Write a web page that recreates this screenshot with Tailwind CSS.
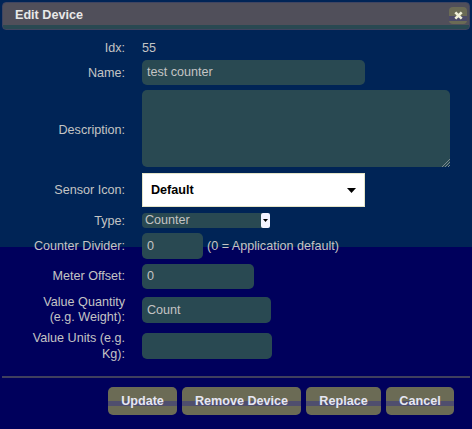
<!DOCTYPE html>
<html>
<head>
<meta charset="utf-8">
<script src="https://cdn.jsdelivr.net/npm/@tailwindcss/browser@4"></script>
</head>
<body class="m-0 w-[472px] h-[429px] overflow-hidden font-['Liberation_Sans',Arial,sans-serif] text-[12.6px] leading-[15px] text-[#c4c4c4] bg-[linear-gradient(#002456_0,#002456_247px,#00005c_247px)]">
<div class="pt-[2px] px-[2px]">
  <div class="h-[28px] rounded-[4px] border border-[#3f4460] bg-[linear-gradient(#504f5a_0,#504f5a_22px,#294952_22px)] flex items-center justify-between pl-[12px] pr-[2px]">
    <span class="font-bold text-[#e8e8e8] leading-none mb-[1px]">Edit Device</span>
    <span class="w-[18px] h-[17px] rounded-[4px] mb-[1px] bg-[linear-gradient(#6b6b55_0,#6b6b55_9px,#4b4a68_9px,#4b4a68_14px,#6b6b55_14px)] flex items-center justify-center">
      <svg width="9" height="9" viewBox="0 0 9 9"><path d="M1.3 1.3 L7.7 7.7 M7.7 1.3 L1.3 7.7" stroke="#f0f0d8" stroke-width="2.6"/></svg>
    </span>
  </div>
</div>
<div class="flex flex-col mt-[8px]">
  <div class="flex items-center h-[20px]">
    <div class="w-[125px] text-right">Idx:</div>
    <div class="ml-[17px]">55</div>
  </div>
  <div class="flex items-center mt-[2px]">
    <div class="w-[125px] text-right pt-[2px]">Name:</div>
    <div class="ml-[17px] w-[223px] h-[25px] rounded-[5px] bg-[#294952] flex items-center px-[5px]">test counter</div>
  </div>
  <div class="flex items-center mt-[5px]">
    <div class="w-[125px] text-right pt-[4px]">Description:</div>
    <div class="relative ml-[17px] w-[308px] h-[77px] rounded-[5px] bg-[#294952]">
      <svg class="absolute right-0 bottom-0" width="9" height="9" viewBox="0 0 9 9"><path d="M1 9 L9 1 M4 9 L9 4 M7 9 L9 7" stroke="#7a8a90" stroke-width="1"/></svg>
    </div>
  </div>
  <div class="flex items-center mt-[6px]">
    <div class="w-[125px] text-right">Sensor Icon:</div>
    <div class="ml-[17px] w-[223px] h-[34px] bg-white border border-[#e4e4c8] flex items-center justify-between pl-[8px] pr-[8px] text-black font-bold">
      <span>Default</span>
      <svg width="9" height="5" viewBox="0 0 9 5"><path d="M0 0 H9 L4.5 5 Z" fill="#000"/></svg>
    </div>
  </div>
  <div class="flex items-center mt-[6px]">
    <div class="w-[125px] text-right mt-[1px] -mb-[1px]">Type:</div>
    <div class="ml-[17px] w-[128px] h-[15px] rounded-[4px] bg-[#294952] flex items-center justify-between pl-[3px]">
      <span>Counter</span>
      <span class="w-[9px] h-[15px] rounded-[2px] bg-[#f4f4ff] flex items-center justify-center">
        <svg width="5" height="3" viewBox="0 0 5 3"><path d="M0 0 H5 L2.5 3 Z" fill="#000"/></svg>
      </span>
    </div>
  </div>
  <div class="flex items-center mt-[5px]">
    <div class="w-[125px] text-right">Counter Divider:</div>
    <div class="ml-[17px] w-[61px] h-[26px] rounded-[5px] bg-[#294952] flex items-center px-[5px]">0</div>
    <div class="ml-[4px]">(0 = Application default)</div>
  </div>
  <div class="flex items-center mt-[5px]">
    <div class="w-[125px] text-right">Meter Offset:</div>
    <div class="ml-[17px] w-[112px] h-[25px] rounded-[5px] bg-[#294952] flex items-center px-[5px]">0</div>
  </div>
  <div class="flex items-center mt-[6px]">
    <div class="w-[125px] text-right">Value Quantity<br>(e.g. Weight):</div>
    <div class="ml-[17px] w-[129px] h-[26px] rounded-[5px] bg-[#294952] flex items-center px-[5px]">Count</div>
  </div>
  <div class="flex items-center mt-[5px]">
    <div class="w-[125px] text-right leading-[16px]">Value Units (e.g.<br>Kg):</div>
    <div class="ml-[17px] w-[130px] h-[26px] rounded-[5px] bg-[#294952]"></div>
  </div>
</div>
<div class="mx-[2px] mt-[14px] h-[2px] bg-[#3f3f5e]"></div>
<div class="flex justify-end gap-[5px] mt-[9px] pr-[18px] font-bold text-[#e6e6f2]">
  <div class="w-[69px] h-[28px] rounded-[5px] flex items-center justify-center bg-[linear-gradient(#6b6b55_0,#6b6b55_14px,#4f4e6e_14px,#4f4e6e_19px,#6b6b55_19px)]">Update</div>
  <div class="w-[119px] h-[28px] rounded-[5px] flex items-center justify-center bg-[linear-gradient(#6b6b55_0,#6b6b55_14px,#4f4e6e_14px,#4f4e6e_19px,#6b6b55_19px)]">Remove Device</div>
  <div class="w-[75px] h-[28px] rounded-[5px] flex items-center justify-center bg-[linear-gradient(#6b6b55_0,#6b6b55_14px,#4f4e6e_14px,#4f4e6e_19px,#6b6b55_19px)]">Replace</div>
  <div class="w-[68px] h-[28px] rounded-[5px] flex items-center justify-center bg-[linear-gradient(#6b6b55_0,#6b6b55_14px,#4f4e6e_14px,#4f4e6e_19px,#6b6b55_19px)]">Cancel</div>
</div>
</body>
</html>
